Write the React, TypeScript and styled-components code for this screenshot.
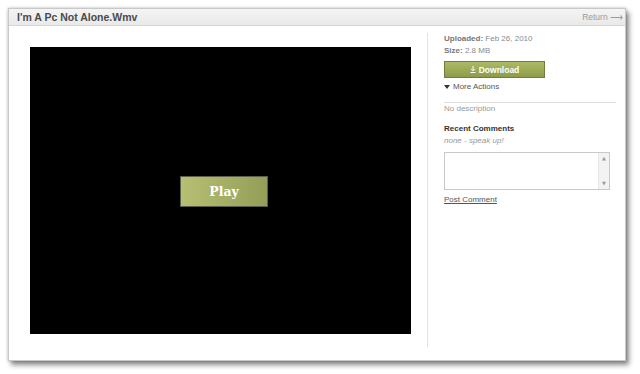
import React from 'react';
import styled, {createGlobalStyle} from 'styled-components';

const Global = createGlobalStyle`
  html, body {
    margin: 0;
    padding: 0;
    background: #fff;
    font-family: "Liberation Sans", Arial, sans-serif;
  }
  #root {
    width: 640px;
    height: 374px;
    padding: 8px 0 0 8px;
    box-sizing: border-box;
  }
`;

const Window = styled.div`
  width: 618px;
  height: 353px;
  box-sizing: border-box;
  border: 1px solid #c8c8c8;
  background: #fff;
  display: flex;
  flex-direction: column;
  box-shadow: 0 0 3px rgba(0, 0, 0, 0.25), 3px 4px 5px rgba(0, 0, 0, 0.45);
`;

const Header = styled.div`
  height: 17px;
  box-sizing: border-box;
  display: flex;
  align-items: center;
  justify-content: space-between;
  padding: 0 2px 0 8px;
  background: linear-gradient(#f4f4f4, #e9e9e9);
  border-bottom: 1px solid #d6d6d6;
`;

const Title = styled.div`
  font-size: 10.5px;
  font-weight: bold;
  color: #4a4a4a;
`;

const Return = styled.a`
  font-size: 8.5px;
  color: #9a9a9a;
  text-decoration: none;
`;

const Body = styled.div`
  flex: 1;
  display: flex;
`;

const Stage = styled.div`
  padding: 21px 16px 0 21px;
`;

const Video = styled.div`
  width: 381px;
  height: 287px;
  background: #000;
  display: flex;
  align-items: center;
  justify-content: center;
`;

const PlayButton = styled.button`
  width: 88px;
  height: 31px;
  margin: 1px 0 0 7px;
  border: 1px solid #5c5f48;
  background: linear-gradient(to right, #b6bf72, #959e58);
  color: #fff;
  font-family: "DejaVu Serif", "Liberation Serif", serif;
  font-weight: bold;
  font-size: 12.5px;
  padding: 0;
`;

const Sidebar = styled.div`
  width: 198px;
  box-sizing: border-box;
  margin: 7px 0 13px;
  border-left: 1px solid #e2e2e2;
  padding: 0 0 0 16px;
  font-size: 8px;
  line-height: 12px;
  color: #8a8a8a;
`;

const Meta = styled.div`
  b {
    color: #777;
  }
`;

const DownloadButton = styled.button`
  margin-top: 4px;
  width: 101px;
  height: 17px;
  border: 1px solid #727d3c;
  background: linear-gradient(#adb967, #8e9b48);
  color: #fff;
  font-family: "Liberation Sans", Arial, sans-serif;
  font-weight: bold;
  font-size: 8.5px;
  display: flex;
  align-items: center;
  justify-content: center;
  gap: 3px;
  padding: 0;
`;

const MoreActions = styled.div`
  margin-top: 3px;
  color: #555;
  display: flex;
  align-items: center;
  gap: 3px;
`;

const Rule = styled.div`
  margin-top: 9px;
  width: 172px;
  border-top: 1px solid #dcdcdc;
`;

const Heading = styled.div`
  margin-top: 8px;
  color: #333;
  font-weight: bold;
`;

const Muted = styled.div<{$italic?: boolean}>`
  color: #999;
  font-style: ${p => (p.$italic ? 'italic' : 'normal')};
`;

const CommentBox = styled.div`
  margin-top: 5px;
  width: 166px;
  height: 38px;
  box-sizing: border-box;
  border: 1px solid #c9c9c9;
  display: flex;
`;

const CommentInput = styled.textarea`
  flex: 1;
  border: none;
  resize: none;
  outline: none;
  padding: 2px;
  font-family: "Liberation Sans", Arial, sans-serif;
  font-size: 9px;
`;

const ScrollTrack = styled.div`
  width: 10px;
  background: #f3f3f3;
  border-left: 1px solid #e6e6e6;
  display: flex;
  flex-direction: column;
  justify-content: space-between;
  align-items: center;
  padding: 3px 0;
  font-size: 5px;
  line-height: 5px;
  color: #999;
  font-family: "DejaVu Sans", sans-serif;
`;

const PostLink = styled.a`
  display: block;
  margin-top: 4px;
  color: #555;
  text-decoration: underline;
`;

const DownloadIcon = () => (
  <svg width="6" height="7" viewBox="0 0 6 7">
    <path d="M3 0v4.5M1 2.8L3 4.8 5 2.8" stroke="#fff" strokeWidth="1" fill="none" />
    <path d="M0.5 6.5h5" stroke="#fff" strokeWidth="1" />
  </svg>
);

const Caret = () => (
  <svg width="6" height="4" viewBox="0 0 6 4">
    <path d="M0 0h6L3 4z" fill="#333" />
  </svg>
);

const App: React.FC = () => {
  return (
    <>
      <Global />
      <Window>
        <Header>
          <Title>I'm A Pc Not Alone.Wmv</Title>
          <Return href="#">Return ⟶</Return>
        </Header>
        <Body>
          <Stage>
            <Video>
              <PlayButton>Play</PlayButton>
            </Video>
          </Stage>
          <Sidebar>
            <Meta><b>Uploaded:</b> Feb 26, 2010</Meta>
            <Meta><b>Size:</b> 2.8 MB</Meta>
            <DownloadButton><DownloadIcon />Download</DownloadButton>
            <MoreActions><Caret />More Actions</MoreActions>
            <Rule />
            <Muted>No description</Muted>
            <Heading>Recent Comments</Heading>
            <Muted $italic>none - speak up!</Muted>
            <CommentBox>
              <CommentInput />
              <ScrollTrack>
                <span>▲</span>
                <span>▼</span>
              </ScrollTrack>
            </CommentBox>
            <PostLink href="#">Post Comment</PostLink>
          </Sidebar>
        </Body>
      </Window>
    </>
  );
};

export default App;
